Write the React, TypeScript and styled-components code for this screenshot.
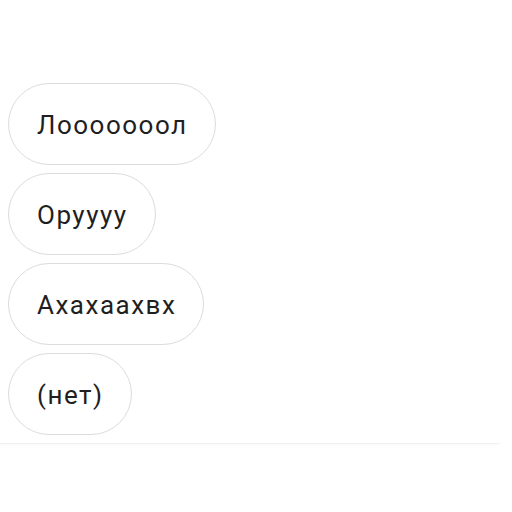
import styled, { createGlobalStyle } from "styled-components";

const GlobalStyle = createGlobalStyle`
  body {
    margin: 0;
    background: #ffffff;
    font-family: Roboto, "Liberation Sans", sans-serif;
  }
`;

const replies = ["Лооооооол", "Оруууу", "Ахахаахвх", "(нет)"];

const App = () => {
  return (
    <>
      <GlobalStyle />
      <Page>
        <ReplyList>
          {replies.map((text) => (
            <ReplyChip key={text}>{text}</ReplyChip>
          ))}
        </ReplyList>
      </Page>
    </>
  );
};

export default App;

const Page = styled.div`
  width: 512px;
  height: 512px;
  padding-top: 83px;
  box-sizing: border-box;
`;

const ReplyList = styled.div`
  display: flex;
  flex-direction: column;
  align-items: flex-start;
  gap: 8px;
  width: 500px;
  padding: 0 0 8px 8px;
  box-sizing: border-box;
  border-bottom: 1px solid #f0f0f0;
  box-shadow: 0 2px 2px -1px rgba(0, 0, 0, 0.03);
`;

const ReplyChip = styled.div`
  display: flex;
  align-items: center;
  height: 82px;
  box-sizing: border-box;
  padding: 2px 27px 0 28px;
  border: 1px solid #dcdcdc;
  border-radius: 41px;
  background: #ffffff;
  color: #1f1f1f;
  font-size: 26px;
  letter-spacing: 1.5px;
  line-height: 1;
`;
